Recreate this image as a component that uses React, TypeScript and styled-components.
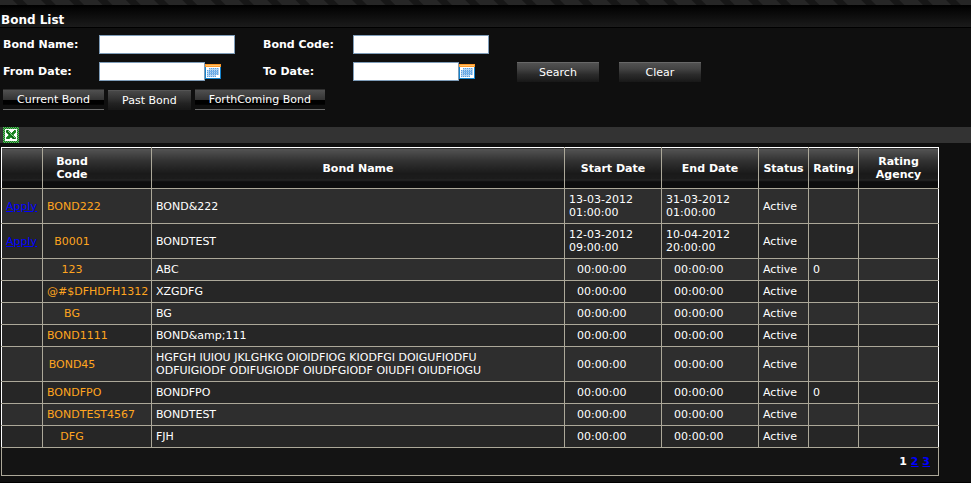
import React from "react";
import styled, { createGlobalStyle } from "styled-components";

const Global = createGlobalStyle`
  *, *::before, *::after { box-sizing: border-box; }
  body {
    margin: 0;
    background: #0f0f0f;
    color: #fff;
    font: 11px/13px Verdana, "DejaVu Sans", sans-serif;
  }
  button, input { font: inherit; color: inherit; }
`;

const Stripes = styled.div`
  height: 5px;
  background: repeating-linear-gradient(45deg, #262626 0 12px, #171717 13px 19px, #262626 20px);
`;

const TitleBar = styled.header`
  height: 23px;
  padding: 8px 1px 0;
  background: linear-gradient(#000, #1b1b1b);
  border-bottom: 1px solid #000;
`;

const Title = styled.h1`
  margin: 0;
  font-size: 12px;
  line-height: 14px;
  font-weight: bold;
`;

const SearchForm = styled.form`
  display: grid;
  grid-template-columns: 96px 164px 90px 164px 102px 102px;
  grid-auto-rows: 27px;
  align-items: center;
  padding: 3px 3px 0;
`;

const Label = styled.label`
  font-weight: bold;
`;

const Field = styled.div`
  display: flex;
  align-items: center;
`;

const TextBox = styled.input<{ $short?: boolean }>`
  width: ${(p) => (p.$short ? 106 : 136)}px;
  height: 19px;
  padding: 1px 3px;
  border: 1px solid #7f9db9;
  border-radius: 0;
  background: #fff;
  color: #000;
`;

const IconButton = styled.button`
  display: block;
  padding: 0;
  border: 0;
  background: none;
  cursor: pointer;

  svg { display: block; }
`;

const PushButton = styled.button`
  width: 82px;
  height: 20px;
  padding: 0;
  border: 0;
  border-top: 1px solid #686868;
  background: linear-gradient(#525252, #444 30%, #2c2c2c 60%, #181818);
  cursor: pointer;
`;

const Spacer = styled.span`
  grid-column: span 2;
`;

const Tabs = styled.nav`
  display: flex;
  align-items: flex-end;
  gap: 4px;
  padding: 4px 3px 0;
`;

const Tab = styled.button<{ $active?: boolean }>`
  height: ${(p) => (p.$active ? 20 : 21)}px;
  padding: ${(p) => (p.$active ? "1px" : "0")} 14px 0;
  border: 0;
  border-top: 1px solid ${(p) => (p.$active ? "#555" : "#303030")};
  border-bottom: 1px solid ${(p) => (p.$active ? "#181818" : "#6b6b6b")};
  background: ${(p) =>
    p.$active
      ? "linear-gradient(#484848, #343434 40%, #222 70%, #181818)"
      : "linear-gradient(#505050, #343434 50%, #000 52%, #000 75%, #0f0f0f 80%)"};
  cursor: pointer;
  white-space: nowrap;
`;

const ToolBar = styled.div`
  height: 16px;
  margin: 17px 0 4px;
  padding-left: 3px;
  background: #333;
`;

const TableArea = styled.main`
  padding: 0 32px 6px 1px;
  border-bottom: 1px solid #000;
`;

const Table = styled.table`
  width: 100%;
  table-layout: fixed;
  border-collapse: collapse;
  border: 1px solid #aca899;
`;

const Col = styled.col<{ $w?: number }>`
  width: ${(p) => (p.$w ? `${p.$w}px` : "auto")};
`;

const Head = styled.th`
  height: 41px;
  padding: 0 4px;
  border: 1px solid #aca899;
  border-top-color: #fff;
  background: linear-gradient(#555, #333 30%, #1a1a1a 62%, #1c1c1c 78%, #2a2a2a 79%, #0d0d0d 82%);
  font-weight: bold;

  &:first-child { border-left-color: #fff; }
  &:last-child { border-right-color: #fff; }
`;

const HeadText = styled.span<{ $narrow?: boolean }>`
  display: block;
  width: ${(p) => (p.$narrow ? "50px" : "auto")};
`;

const Row = styled.tr`
  height: 22px;
  background: #2e2e2e;

  &:nth-child(even) { background: #262626; }
`;

const Cell = styled.td<{ $indent?: boolean }>`
  padding: 4px 4px 4px ${(p) => (p.$indent ? 12 : 4)}px;
  border: 1px solid #aca899;

  &:first-child { border-left-color: #fff; }
  &:last-child { border-right-color: #fff; }
`;

const NameCell = styled(Cell)`
  padding-right: 32px;
`;

const Link = styled.a`
  color: #00f;
`;

const Code = styled.a`
  display: inline-block;
  min-width: 50px;
  color: #ffa51f;
  text-align: center;
  text-decoration: none;
  white-space: nowrap;
`;

const Pager = styled.td`
  height: 28px;
  padding: 0 8px 0 0;
  background: #141414;
  font-weight: bold;
  text-align: right;
`;

const CalendarIcon = () => (
  <svg width="16" height="15" viewBox="0 0 16 15" shapeRendering="crispEdges" aria-hidden="true">
    <path fill="#1583cc" d="M0 3h16v12H0z" />
    <path fill="#fff" d="M1 3h14v11H1z" />
    <path fill="#ff9a2a" d="M0 0h16v3H0z" />
    <path fill="#ffc26a" d="M1 1h14v1H1z" />
    <path fill="#b3d4f2" d="M4 4h10v7H4zM2 6h2v7H2zM4 11h7v2H4z" />
    <path
      stroke="#5a9fe0"
      strokeDasharray="1 1"
      d="M4 4.5h10M2 6.5h12M2 8.5h12M2 10.5h12M2 12.5h9"
    />
    <path stroke="#79b4ea" d="M4 7.5h9M4 9.5h9" />
  </svg>
);

const ExcelIcon = () => (
  <svg width="16" height="16" viewBox="0 0 16 16" shapeRendering="crispEdges" aria-hidden="true">
    <defs>
      <pattern id="weave" width="2" height="2" patternUnits="userSpaceOnUse">
        <path fill="#157a20" d="M0 0h2v2H0z" />
        <path fill="#61b765" d="M0 0h1v1H0zM1 1h1v1H1z" />
      </pattern>
    </defs>
    <path fill="url(#weave)" d="M0 0h16v16H0z" />
    <path fill="#fff" d="M2 2h12v12H2z" />
    <path fill="#3b9643" d="M3 3h10v10H3z" />
    <path fill="#fff" d="M6 3h5v1H6zM7 4h3v1H7zM8 5h1v1H8zM3 6h1v1H3zM3 7h2v2H3zM3 9h1v1H3zM12 6h1v1h-1zM11 7h2v2h-2zM12 9h1v1h-1zM3 12h10v1H3zM7 11h2v1H7z" />
    <path stroke="#0b6415" strokeWidth="2" fill="none" d="M4 4l8 8" />
    <path stroke="#16831f" strokeWidth="2" fill="none" d="M12 4l-8 8" />
    <path stroke="#8bd08e" fill="none" d="M5 4l7 7" />
  </svg>
);

type Bond = {
  code: string;
  name: string;
  start?: string;
  end?: string;
  rating?: string;
};

const bonds: Bond[] = [
  { code: "BOND222", name: "BOND&222", start: "13-03-2012 01:00:00", end: "31-03-2012 01:00:00" },
  { code: "B0001", name: "BONDTEST", start: "12-03-2012 09:00:00", end: "10-04-2012 20:00:00" },
  { code: "123", name: "ABC", rating: "0" },
  { code: "@#$DFHDFH1312", name: "XZGDFG" },
  { code: "BG", name: "BG" },
  { code: "BOND1111", name: "BOND&amp;111" },
  {
    code: "BOND45",
    name: "HGFGH IUIOU JKLGHKG OIOIDFIOG KIODFGI DOIGUFIODFU ODFUIGIODF ODIFUGIODF OIUDFGIODF OIUDFI OIUDFIOGU",
  },
  { code: "BONDFPO", name: "BONDFPO", rating: "0" },
  { code: "BONDTEST4567", name: "BONDTEST" },
  { code: "DFG", name: "FJH" },
];

const emptyTime = "00:00:00";

export default function App() {
  return (
    <>
      <Global />
      <Stripes />
      <TitleBar>
        <Title>Bond List</Title>
      </TitleBar>
      <SearchForm onSubmit={(e) => e.preventDefault()}>
        <Label htmlFor="bond-name">Bond Name:</Label>
        <Field>
          <TextBox id="bond-name" type="text" />
        </Field>
        <Label htmlFor="bond-code">Bond Code:</Label>
        <Field>
          <TextBox id="bond-code" type="text" />
        </Field>
        <Spacer />
        <Label htmlFor="from-date">From Date:</Label>
        <Field>
          <TextBox id="from-date" type="text" $short />
          <IconButton type="button" aria-label="Pick from date">
            <CalendarIcon />
          </IconButton>
        </Field>
        <Label htmlFor="to-date">To Date:</Label>
        <Field>
          <TextBox id="to-date" type="text" $short />
          <IconButton type="button" aria-label="Pick to date">
            <CalendarIcon />
          </IconButton>
        </Field>
        <PushButton type="submit">Search</PushButton>
        <PushButton type="reset">Clear</PushButton>
      </SearchForm>
      <Tabs>
        <Tab type="button">Current Bond</Tab>
        <Tab type="button" $active>
          Past Bond
        </Tab>
        <Tab type="button">ForthComing Bond</Tab>
      </Tabs>
      <ToolBar>
        <IconButton type="button" aria-label="Export to Excel">
          <ExcelIcon />
        </IconButton>
      </ToolBar>
      <TableArea>
        <Table>
          <colgroup>
            <Col $w={41} />
            <Col $w={109} />
            <Col />
            <Col $w={97} />
            <Col $w={97} />
            <Col $w={50} />
            <Col $w={50} />
            <Col $w={80} />
          </colgroup>
          <thead>
            <tr>
              <Head />
              <Head>
                <HeadText $narrow>Bond Code</HeadText>
              </Head>
              <Head>Bond Name</Head>
              <Head>Start Date</Head>
              <Head>End Date</Head>
              <Head>Status</Head>
              <Head>Rating</Head>
              <Head>Rating Agency</Head>
            </tr>
          </thead>
          <tbody>
            {bonds.map((b) => (
              <Row key={b.code}>
                <Cell>{b.start && <Link href="#apply">Apply</Link>}</Cell>
                <Cell>
                  <Code href="#bond">{b.code}</Code>
                </Cell>
                <NameCell>{b.name}</NameCell>
                <Cell $indent={!b.start}>{b.start ?? emptyTime}</Cell>
                <Cell $indent={!b.end}>{b.end ?? emptyTime}</Cell>
                <Cell>Active</Cell>
                <Cell>{b.rating}</Cell>
                <Cell />
              </Row>
            ))}
          </tbody>
          <tfoot>
            <tr>
              <Pager colSpan={8}>
                1 <Link href="#page-2">2</Link> <Link href="#page-3">3</Link>
              </Pager>
            </tr>
          </tfoot>
        </Table>
      </TableArea>
    </>
  );
}
